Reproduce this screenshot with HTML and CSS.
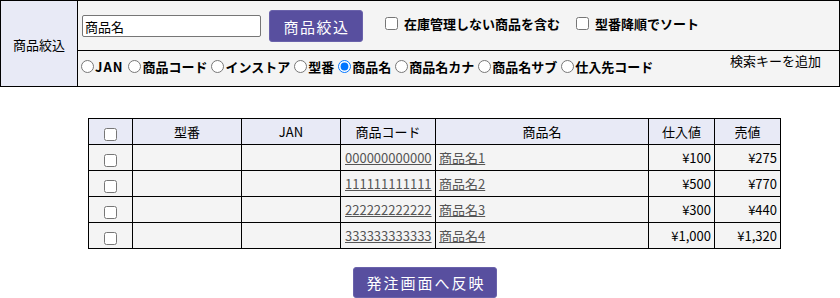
FILE: index.html
```html
<!DOCTYPE html>
<html lang="ja">
<head>
<meta charset="utf-8">
<title>商品絞込</title>
<link rel="stylesheet" href="styles.css">
</head>
<body>
<div class="filter">
  <div class="filter-label">商品絞込</div>
  <div class="filter-body">
    <div class="filter-row1">
      <input class="search-input" type="text" value="商品名">
      <button class="btn btn-search" type="button">商品絞込</button>
      <label class="chk"><input type="checkbox"> 在庫管理しない商品を含む</label>
      <label class="chk chk2"><input type="checkbox"> 型番降順でソート</label>
    </div>
    <div class="filter-row2">
      <div class="radios">
        <label class="rd rd-jan"><input type="radio" name="k">JAN</label>
        <label class="rd"><input type="radio" name="k">商品コード</label>
        <label class="rd"><input type="radio" name="k">インストア</label>
        <label class="rd"><input type="radio" name="k">型番</label>
        <label class="rd"><input type="radio" name="k" checked>商品名</label>
        <label class="rd"><input type="radio" name="k">商品名カナ</label>
        <label class="rd"><input type="radio" name="k">商品名サブ</label>
        <label class="rd"><input type="radio" name="k">仕入先コード</label>
      </div>
      <div class="add-key">検索キーを追加</div>
    </div>
  </div>
</div>

<div class="table-wrap">
  <table class="items">
    <colgroup>
      <col class="c-chk"><col class="c-model"><col class="c-jan"><col class="c-code"><col class="c-name"><col class="c-price"><col class="c-price">
    </colgroup>
    <thead>
      <tr>
        <th><input type="checkbox"></th>
        <th>型番</th>
        <th>JAN</th>
        <th>商品コード</th>
        <th>商品名</th>
        <th>仕入値</th>
        <th>売値</th>
      </tr>
    </thead>
    <tbody>
      <tr>
        <td class="center"><input type="checkbox"></td><td></td><td></td>
        <td class="code"><a href="#">000000000000</a></td>
        <td><a href="#">商品名1</a></td>
        <td class="num">¥100</td><td class="num">¥275</td>
      </tr>
      <tr>
        <td class="center"><input type="checkbox"></td><td></td><td></td>
        <td class="code"><a href="#">111111111111</a></td>
        <td><a href="#">商品名2</a></td>
        <td class="num">¥500</td><td class="num">¥770</td>
      </tr>
      <tr>
        <td class="center"><input type="checkbox"></td><td></td><td></td>
        <td class="code"><a href="#">222222222222</a></td>
        <td><a href="#">商品名3</a></td>
        <td class="num">¥300</td><td class="num">¥440</td>
      </tr>
      <tr>
        <td class="center"><input type="checkbox"></td><td></td><td></td>
        <td class="code"><a href="#">333333333333</a></td>
        <td><a href="#">商品名4</a></td>
        <td class="num">¥1,000</td><td class="num">¥1,320</td>
      </tr>
    </tbody>
  </table>
</div>

<div class="actions">
  <button class="btn btn-apply" type="button">発注画面へ反映</button>
</div>
</body>
</html>
```

FILE: styles.css
```css
* { box-sizing: border-box; }
html, body { margin: 0; padding: 0; background: #fff; }
body {
  font-family: "Noto Sans CJK JP", "Noto Sans", sans-serif;
  font-size: 13px;
  color: #000;
  width: 840px;
  height: 298px;
  overflow: hidden;
}

.filter {
  display: flex;
  width: 840px;
  height: 87px;
  border: 1px solid #000;
}
.filter-label {
  width: 77px;
  flex: none;
  background: #e8eaf6;
  border-right: 1px solid #000;
  display: flex;
  align-items: center;
  justify-content: center;
  font-size: 13px;
  padding-top: 1px;
}
.filter-body {
  flex: 1;
  background: #f4f4f4;
  display: flex;
  flex-direction: column;
}
.filter-row1 {
  height: 50px;
  border-bottom: 1px solid #000;
  display: flex;
  align-items: center;
  padding-left: 4px;
  padding-top: 1px;
}
.search-input {
  width: 179px;
  height: 22px;
  border: 1px solid #767676;
  border-radius: 2px;
  background: #fff;
  font-family: inherit;
  font-size: 13px;
  padding: 0 2px;
  margin: 0;
}
.btn {
  background: #584f9f;
  color: #fff;
  border: 1px solid #6a62ab;
  border-radius: 3px;
  font-family: inherit;
  cursor: pointer;
  margin: 0;
}
.btn-search {
  margin-left: 8px;
  width: 94px;
  height: 32px;
  font-size: 15px;
  letter-spacing: 1.5px;
  padding: 0 0 0 1px;
}
.chk {
  display: flex;
  align-items: center;
  font-weight: bold;
  font-size: 13px;
  margin-left: 22px;
  margin-top: -5px;
  white-space: nowrap;
}
.chk input {
  margin: 0 6px 0 0;
  width: 13px;
  height: 13px;
}
.chk2 { margin-left: 16px; }

.filter-row2 {
  flex: 1;
  display: flex;
  align-items: flex-start;
  justify-content: space-between;
  padding-left: 3px;
}
.radios {
  display: flex;
  align-items: center;
  margin-top: 6px;
}
.rd {
  display: flex;
  align-items: center;
  font-weight: bold;
  font-size: 13px;
  margin-right: 4px;
  white-space: nowrap;
}
.rd-jan { letter-spacing: 1px; margin-right: 5px; }
.rd input {
  margin: 0 1px 0 0;
  width: 13px;
  height: 13px;
}
.add-key {
  font-size: 13px;
  margin-top: 0;
  margin-right: 18px;
}

.table-wrap {
  padding: 31px 0 0 88px;
}
.items {
  border-collapse: collapse;
  table-layout: fixed;
  width: 693px;
}
.c-chk { width: 44px; }
.c-model { width: 109px; }
.c-jan { width: 99px; }
.c-code { width: 95px; }
.c-name { width: 213px; }
.c-price { width: 66px; }
.items th, .items td {
  border: 1px solid #000;
  height: 26px;
  padding: 0 3px;
  font-size: 13px;
  white-space: nowrap;
}
.items th {
  background: #e8eaf6;
  font-weight: normal;
  text-align: center;
}
.items td {
  background: #f4f4f4;
  text-align: left;
}
.items td.center { text-align: center; }
.items td.num { text-align: right; padding-right: 3px; }
.items td.code { padding-left: 4px; padding-right: 2px; }
.items input[type=checkbox] {
  width: 13px;
  height: 13px;
  margin: 3px 0 0 0;
  vertical-align: middle;
}
.items a {
  color: #555;
  text-decoration: underline;
}

.actions {
  display: flex;
  justify-content: center;
  padding-top: 18px;
  padding-left: 10px;
}
.btn-apply {
  width: 144px;
  height: 31px;
  font-size: 15px;
  letter-spacing: 2px;
  padding: 0 0 0 2px;
}
```
